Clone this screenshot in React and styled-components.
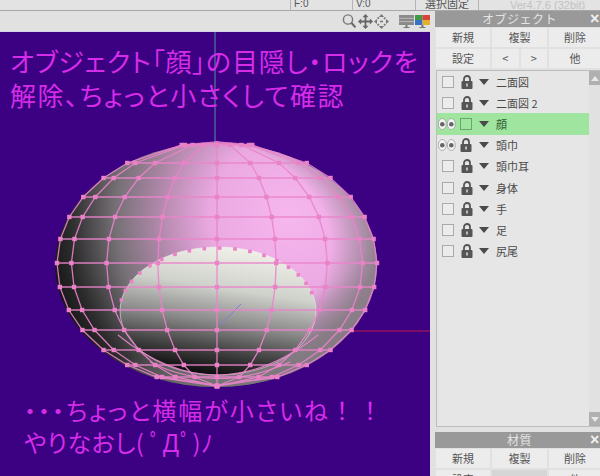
import React from "react";
import styled, { createGlobalStyle } from "styled-components";

const Global = createGlobalStyle`
  html, body { margin: 0; padding: 0; background: #e1e1e1; }
  body { font-family: "Noto Sans CJK JP", "Noto Sans", sans-serif; }
`;

const Page = styled.div`
  width: 600px; height: 476px; overflow: hidden; display: flex; flex-direction: column;
  background: #e1e1e1; color: #444;
`;
const TopBar = styled.div`
  height: 11px; flex: none; display: flex; padding-left: 290px; box-sizing: border-box;
  border-bottom: 1px solid #a8a8a8; overflow: hidden; background: #e3e3e3;
`;
const TopCell = styled.div`
  width: ${p => p.$w}px; flex: none; box-sizing: border-box; border-left: 1px solid #b4b4b4;
  font: ${p => p.$size || 10}px/${p => p.$lh || 8}px "Liberation Sans", "Noto Sans CJK JP", sans-serif;
  color: ${p => p.$color || "#555"}; padding-left: ${p => p.$pad ?? 3}px; white-space: nowrap;
  ${p => p.$center && "text-align: center;"}
`;
const Main = styled.div`flex: 1; display: flex; min-height: 0;`;
const LeftColumn = styled.div`width: 435px; flex: none; display: flex; flex-direction: column;`;
const Toolbar = styled.div`
  height: 20px; flex: none; width: 430px; display: flex; align-items: center; justify-content: flex-end; gap: 1px;
  background: #e1e1e1; border-bottom: 1px solid #d9cfe6;
`;
const Spacer = styled.span`width: 8px;`;
const Canvas = styled.div`
  position: relative; flex: 1; width: 430px; background: #3c0082; overflow: hidden;
  display: flex; flex-direction: column;
`;
const Scene = styled.svg`position: absolute; left: 0; top: 0; width: 430px; height: 444px;`;
const Caption = styled.div`
  position: relative; font-size: ${p => p.$size}px; line-height: ${p => p.$lh}px; color: #d52ce8;
  font-feature-settings: "palt" 1; white-space: nowrap;
  padding: ${p => p.$pad};
  ${p => p.$bottom && "margin-top: auto;"}
`;
const CaptionLine = styled.div`letter-spacing: ${p => p.$ls}px;`;
const WideMarks = styled.span`font-feature-settings: normal; letter-spacing: 4px;`;
const Panel = styled.div`flex: 1; min-width: 0; display: flex; flex-direction: column; gap: 1px;`;
const PanelHeader = styled.div`
  height: 16px; flex: none; margin-top: ${p => p.$top || 0}px; background: #999; color: #e4e4e4; font-size: 12px; line-height: 16px;
  text-align: center; position: relative; padding-left: 4px; letter-spacing: .5px;
`;
const Close = styled.span`
  position: absolute; right: 0; top: 0; width: 10px; font: bold 16px/16px "Liberation Sans", sans-serif; color: #f0f0f0;
`;
const ButtonRow = styled.div`
  display: grid; grid-template-columns: 54px 55px 52px; gap: 2px; padding-left: 1px; height: 19px; flex: none;
  margin-bottom: 1px;
`;
const SplitCell = styled.div`display: grid; grid-template-columns: 1fr 1fr; gap: 2px;`;
const PanelButton = styled.div`
  background: ${p => p.$off ? "#d6d6d6" : "#ececec"}; color: #555; font-size: 11px; line-height: 19px; text-align: center;
`;
const ListBox = styled.div`
  height: 357px; flex: none; margin-left: 1px; box-sizing: border-box; background: #e6e6e6;
  border: 1px solid #bdbdbd; border-width: 1px 0 1px 1px; display: flex; position: relative;
`;
const List = styled.div`flex: 1; min-width: 0; display: flex; flex-direction: column; padding-top: 0;`;
const Row = styled.div`
  height: 21.2px; flex: none; display: flex; align-items: center; position: relative;
  background: ${p => p.$active ? "#9fe5a0" : "transparent"};
`;
const IconSlot = styled.div`
  width: ${p => p.$w}px; flex: none; display: flex; align-items: center; justify-content: center;
`;
const Check = styled.span`
  width: 10px; height: 10px; border: 1px solid #aaa; background: #ececec; display: block;
  ${p => p.$active && "background: transparent; border-color: #6aa56c;"}
`;
const RowLabel = styled.span`
  font-size: 11px; line-height: 14px; color: ${p => p.$active ? "#2d5a30" : "#4a4a4a"}; margin-left: 4px;
`;
const Scrollbar = styled.div`
  width: 11px; flex: none; background: #e1e1e1; display: flex; flex-direction: column; justify-content: space-between;
`;
const ScrollCap = styled.div`
  height: 14px; background: #b0b0b0; display: flex; align-items: center; justify-content: center;
`;

const Lock = () => (
  <svg width="12" height="14" viewBox="0 0 12 14">
    <path d="M3 6.5V4a3 3 0 0 1 6 0v2.5" fill="none" stroke="#555" strokeWidth="1.8" />
    <rect x="0.5" y="6" width="11" height="8" rx="1" fill="#555" />
    <rect x="5" y="8.5" width="2" height="3" fill="#bbb" />
  </svg>
);
const Tri = () => (
  <svg width="10" height="6" viewBox="0 0 10 6"><path d="M0 0h10L5 6z" fill="#4a4a4a" /></svg>
);
const Eyes = () => (
  <svg width="18" height="12" viewBox="0 0 18 12">
    {[4.3, 13.3].map(x => (
      <g key={x}>
        <ellipse cx={x} cy="6" rx="4" ry="5.5" fill="#f4f4f4" stroke="#a0a0a0" strokeWidth=".8" />
        <circle cx={x} cy="6.2" r="2.3" fill="#666" />
      </g>
    ))}
  </svg>
);

const Magnifier = () => (
  <svg width="15" height="16" viewBox="0 0 15 16">
    <circle cx="6" cy="6.5" r="4.6" fill="none" stroke="#777" strokeWidth="1.4" />
    <path d="M9.5 10l4 4.4" stroke="#666" strokeWidth="2" />
  </svg>
);
const MoveIcon = () => (
  <svg width="15" height="15" viewBox="0 0 15 15" fill="#666">
    <path d="M7.5 0l3 3.2H8.4v3.4h3.4V4.5l3.2 3-3.2 3V8.4H8.4v3.4h2.1l-3 3.2-3-3.2h2.1V8.4H3.2v2.1L0 7.5l3.2-3v2.1h3.4V3.2H4.5z" />
  </svg>
);
const RotateIcon = () => (
  <svg width="15" height="15" viewBox="0 0 15 15" fill="#777">
    <path d="M7.5 0l2.6 3H5z" /><path d="M7.5 15l-2.6-3h5.2z" /><path d="M0 7.5l3-2.6v5.2z" /><path d="M15 7.5l-3 2.6V4.9z" />
    <path d="M3.5 3.5l1.5 1M11.5 3.5L10 5M3.5 11.5L5 10M11.5 11.5L10 10M6 7.5h3" stroke="#777" strokeWidth="1.6" />
  </svg>
);
const Monitor = ({ color }) => (
  <svg width="15" height="13" viewBox="0 0 15 13">
    {color ? (
      <>
        <rect x="0" y="0" width="7.5" height="5" fill="#3f9a44" />
        <rect x="7.5" y="0" width="7.5" height="5" fill="#d8443a" />
        <rect x="0" y="5" width="7.5" height="5" fill="#3a6fc8" />
        <rect x="7.5" y="5" width="7.5" height="5" fill="#e3b02e" />
      </>
    ) : (
      <>
        <rect x="0" y="0" width="15" height="10" fill="#8a8a8a" />
        <path d="M0 3.3h15M0 6.6h15" stroke="#c4c4c4" strokeWidth=".8" />
      </>
    )}
    <path d="M6.5 10h2v2h2v1h-6v-1h2z" fill="#777" />
  </svg>
);

const cx = 217, cy = 264, rx = 160, ry = 122;
const rowYs = [145, 163, 178, 197, 217, 239, 263, 287, 310, 330, 350, 365, 377, 386];
const longs = [-1, -0.91, -0.69, -0.37, 0, 0.37, 0.69, 0.91, 1];
const xAt = (y, s) => cx + rx * Math.sqrt(Math.max(0, 1 - ((y - cy) / ry) ** 2)) * s;
const Y = y => y - 32;

const Sphere = () => {
  const rows = rowYs.map(y => `M${xAt(y, -1).toFixed(1)} ${Y(y)}L${xAt(y, 1).toFixed(1)} ${Y(y)}`).join("");
  const meridians = longs.map(s => {
    const pts = [142, ...rowYs, 386].map(y => `${xAt(y, s).toFixed(1)},${Y(y)}`);
    return `M${pts.join("L")}`;
  }).join("");
  const dots = [];
  rowYs.forEach(y => longs.forEach(s => dots.push([xAt(y, s), y])));
  const lip = [];
  for (let a = 190; a <= 350; a += 9) {
    lip.push([218 + 98 * Math.cos(a * Math.PI / 180), 311 + 63 * Math.sin(a * Math.PI / 180)]);
  }
  return (
    <Scene viewBox="0 0 430 444">
      <defs>
        <radialGradient id="skin" gradientUnits="userSpaceOnUse" cx="290" cy="185" r="250">
          <stop offset="0" stopColor="#f6b6ee" />
          <stop offset=".32" stopColor="#eba9e2" />
          <stop offset=".5" stopColor="#b98cb2" />
          <stop offset=".7" stopColor="#757075" />
          <stop offset=".88" stopColor="#2c2c2c" />
          <stop offset="1" stopColor="#111" />
        </radialGradient>
        <radialGradient id="rim" gradientUnits="userSpaceOnUse" cx="0" cy="0" r="1"
          gradientTransform={`translate(${cx - 70} ${Y(cy) - 20}) scale(${rx + 70} ${ry + 20})`}>
          <stop offset=".8" stopColor="#777" stopOpacity="0" />
          <stop offset="1" stopColor="#777" stopOpacity=".75" />
        </radialGradient>
        <linearGradient id="hole" gradientUnits="userSpaceOnUse" x1="232" y1="216" x2="212" y2="343">
          <stop offset="0" stopColor="#eef0e8" />
          <stop offset=".32" stopColor="#cfd1cb" />
          <stop offset=".58" stopColor="#8c8c8c" />
          <stop offset=".8" stopColor="#444" />
          <stop offset="1" stopColor="#0c0c0c" />
        </linearGradient>
      </defs>
      <path d={`M215 0V112`} stroke="#4f93a6" strokeWidth="1" />
      <path d="M350 299H430" stroke="#c01a4e" strokeWidth="1" />
      <ellipse cx="216" cy={Y(265)} rx="161" ry="122" fill="url(#skin)" />
      <ellipse cx="216" cy={Y(265)} rx="161" ry="122" fill="url(#rim)" />
      <ellipse cx="218" cy={Y(311)} rx="98" ry="64" fill="url(#hole)" stroke="#eee" strokeWidth=".6" />
      <path d="M220 293L241 272" stroke="#7d7fe0" strokeWidth="1" />
      <g fill="none" stroke="#ea84cb" strokeOpacity=".9">
        <path d={rows} strokeWidth="1.4" />
        <path d={meridians} strokeWidth="1.3" />
        <path d={`M118 ${Y(335)}Q216 ${Y(415)} 318 ${Y(335)}`} strokeWidth="1.2" />
        <path d={`M150 ${Y(362)}Q216 ${Y(395)} 290 ${Y(362)}`} strokeWidth="1.2" />
      </g>
      <g fill="#e982c7">
        {dots.map(([x, y], i) => <rect key={i} x={x - 2.2} y={Y(y) - 2.2} width="4.4" height="4.4" />)}
        {lip.map(([x, y], i) => <rect key={i} x={x - 1.8} y={Y(y) - 1.8} width="3.6" height="3.6" />)}
      </g>
    </Scene>
  );
};

const objects = [
  { name: "二面図" },
  { name: "二面図 2" },
  { name: "顔", eye: true, active: true },
  { name: "頭巾", eye: true, lock: true },
  { name: "頭巾耳" },
  { name: "身体" },
  { name: "手" },
  { name: "足" },
  { name: "尻尾" },
];

const LayerRow = ({ o }) => (
  <Row $active={o.active}>
    <IconSlot $w={o.eye ? 20 : 22}>{o.eye ? <Eyes /> : <Check />}</IconSlot>
    <IconSlot $w={o.eye ? 18 : 16}>{o.active ? <Check $active /> : <Lock />}</IconSlot>
    <IconSlot $w={17}><Tri /></IconSlot>
    <RowLabel $active={o.active}>{o.name}</RowLabel>
  </Row>
);

export default function App() {
  return (
    <Page>
      <Global />
      <TopBar>
        <TopCell $w={62}>F:0</TopCell>
        <TopCell $w={63}>V:0</TopCell>
        <TopCell $w={63} $size={11} $center $pad={0}>選択固定</TopCell>
        <TopCell $w={122} $size={11} $lh={10} $color="#c2c2c2" $pad={31}>Ver4.7.6 (32bit)</TopCell>
      </TopBar>
      <Main>
        <LeftColumn>
          <Toolbar>
            <Magnifier /><MoveIcon /><RotateIcon /><Spacer /><Monitor /><Monitor color />
          </Toolbar>
          <Canvas>
            <Sphere />
            <Caption $size={26} $lh={34} $pad="12px 0 0 10px">
              <CaptionLine $ls={0.8}>オブジェクト「顔」の目隠し・ロックを</CaptionLine>
              <CaptionLine $ls={1.5}>解除、ちょっと小さくして確認</CaptionLine>
            </Caption>
            <Caption $bottom $size={24} $lh={32} $pad="0 0 18px 24px">
              <CaptionLine $ls={2}>・・・ちょっと横幅が小さいね<WideMarks>！！</WideMarks></CaptionLine>
              <CaptionLine $ls={0.5}>やりなおし( ﾟДﾟ)ﾉ</CaptionLine>
            </Caption>
          </Canvas>
        </LeftColumn>
        <Panel>
          <PanelHeader>オブジェクト<Close>×</Close></PanelHeader>
          <ButtonRow><PanelButton>新規</PanelButton><PanelButton>複製</PanelButton><PanelButton>削除</PanelButton></ButtonRow>
          <ButtonRow>
            <PanelButton>設定</PanelButton>
            <SplitCell><PanelButton>&lt;</PanelButton><PanelButton>&gt;</PanelButton></SplitCell>
            <PanelButton>他</PanelButton>
          </ButtonRow>
          <ListBox>
            <List>{objects.map(o => <LayerRow key={o.name} o={o} />)}</List>
            <Scrollbar>
              <ScrollCap><svg width="8" height="5" viewBox="0 0 8 5"><path d="M0 5h8L4 0z" fill="#e8e8e8" /></svg></ScrollCap>
              <ScrollCap><svg width="8" height="5" viewBox="0 0 8 5"><path d="M0 0h8L4 5z" fill="#e8e8e8" /></svg></ScrollCap>
            </Scrollbar>
          </ListBox>
          <PanelHeader $top={4}>材質<Close>×</Close></PanelHeader>
          <ButtonRow><PanelButton>新規</PanelButton><PanelButton>複製</PanelButton><PanelButton>削除</PanelButton></ButtonRow>
          <ButtonRow><PanelButton>設定</PanelButton><PanelButton $off /><PanelButton>他</PanelButton></ButtonRow>
        </Panel>
      </Main>
    </Page>
  );
}
